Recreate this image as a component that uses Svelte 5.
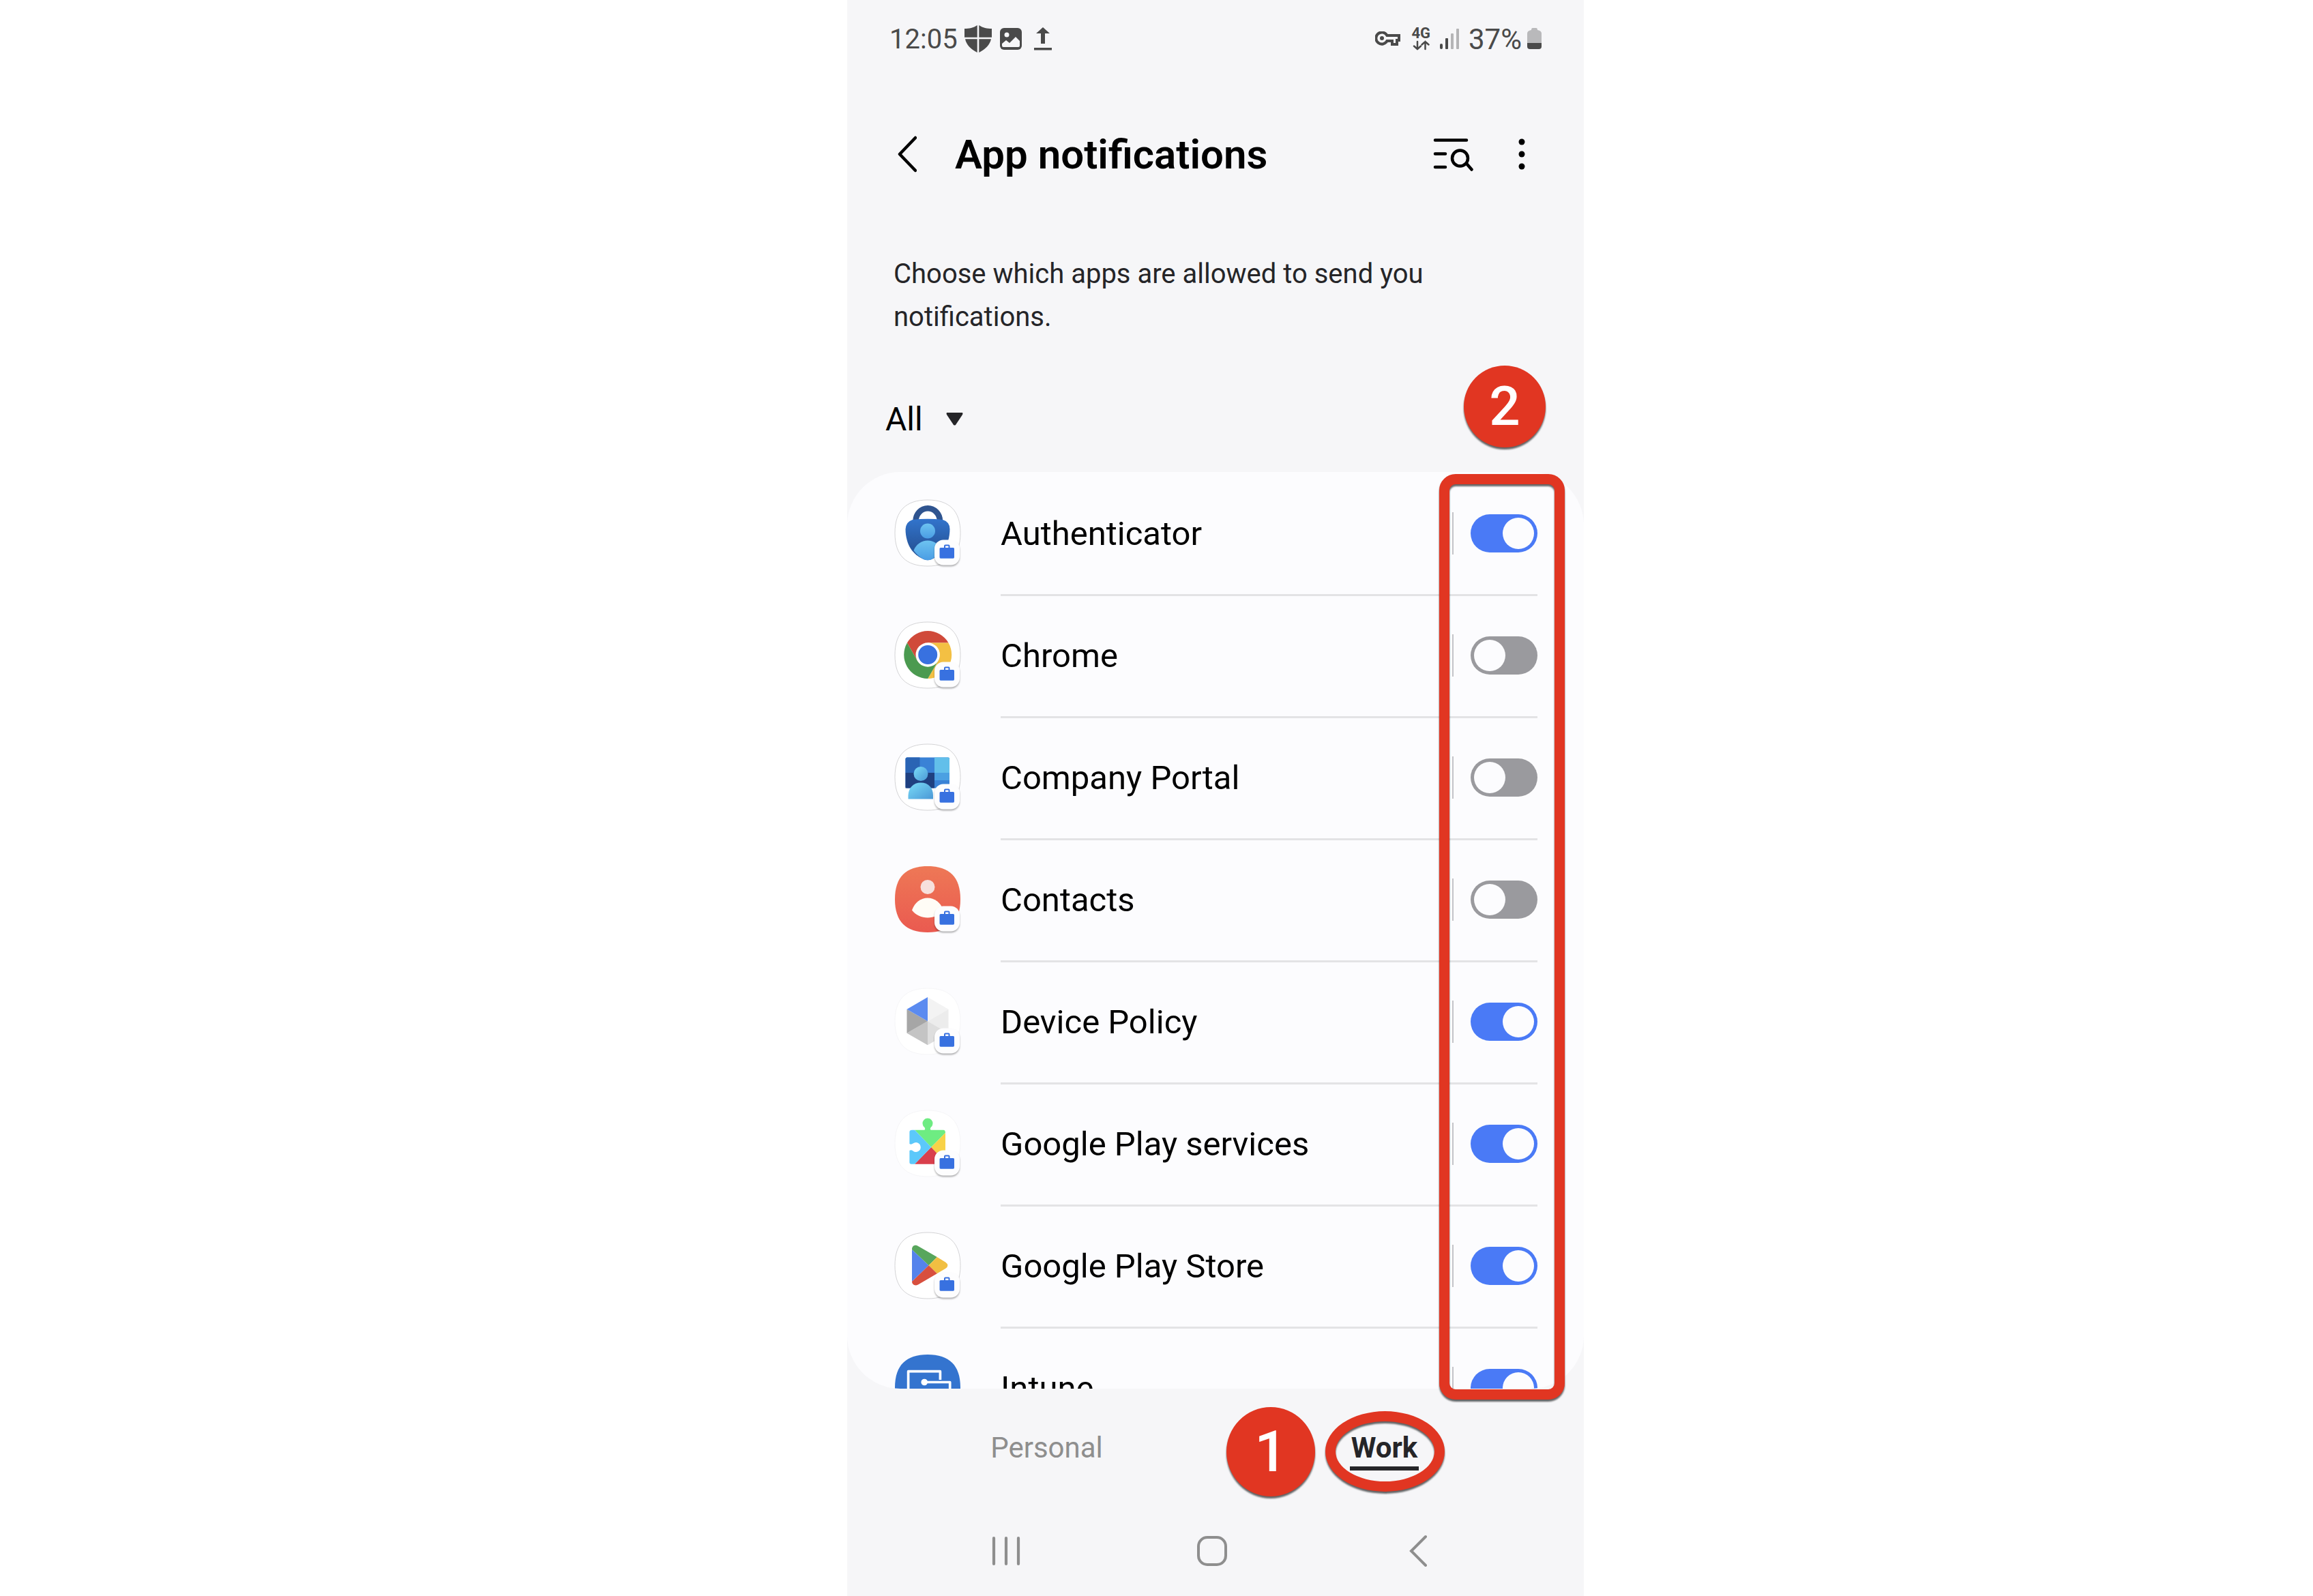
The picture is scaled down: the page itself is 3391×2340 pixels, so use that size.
<script lang="ts">
  interface App {
    id: string;
    name: string;
    enabled: boolean;
  }

  let apps: App[] = $state([
    { id: 'authenticator', name: 'Authenticator', enabled: true },
    { id: 'chrome', name: 'Chrome', enabled: false },
    { id: 'portal', name: 'Company Portal', enabled: false },
    { id: 'contacts', name: 'Contacts', enabled: false },
    { id: 'policy', name: 'Device Policy', enabled: true },
    { id: 'services', name: 'Google Play services', enabled: true },
    { id: 'store', name: 'Google Play Store', enabled: true },
    { id: 'intune', name: 'Intune', enabled: true },
  ]);

  let profile = $state('work');

  const tile = 'M48 0C80 0 96 16 96 48.5S80 97 48 97 0 81 0 48.5 16 0 48 0Z';
  const tileFill: Record<string, string> = {
    contacts: 'url(#contacts-bg)',
    intune: '#3474cf',
  };
  const tileStroke: Record<string, string> = {
    contacts: 'none',
    intune: 'none',
    policy: '#f6f6f8',
    services: '#f6f6f8',
  };
</script>

<div class="page">
  <main class="phone">
    <div class="status">
      <span class="clock">12:05</span>
      <svg class="shield" width="40" height="40" viewBox="0 0 40 40" fill="#4a4a4a">
        <path d="M18.700 0C13 4 7 5 0 5V17.700H18.700ZM21.300 0C27 4 33 5 40 5V17.700H21.300ZM18.700 20.300H1C3 29 9 35 18.700 40ZM21.300 20.300H39C37 29 31 35 21.300 40Z" />
      </svg>
      <svg class="photo" width="32" height="32" viewBox="0 0 32 32">
        <rect width="32" height="32" rx="6" fill="#4a4a4a" />
        <circle cx="10" cy="10" r="3.500" fill="#f6f6f8" />
        <path d="M3 23L9 18L14 22L23 13L29 19V26Q29 28 27 28H5Q3 28 3 26Z" fill="#f6f6f8" />
      </svg>
      <svg width="26" height="34" viewBox="0 0 26 34" fill="#4a4a4a">
        <path d="M13 0L23 9H16V24H10V9H3ZM0 30H26V33.500H0Z" />
      </svg>
      <span class="spacer"></span>
      <svg class="key" width="37" height="22" viewBox="0 0 37 22">
        <path d="M17.500 6H35V13H32V19H25V14H17.500A8.600 8.600 0 1 1 17.500 6Z" fill="none" stroke="#4a4a4a" stroke-width="4" />
        <circle cx="10" cy="10" r="3" fill="#4a4a4a" />
      </svg>
      <span class="network">
        <span>4G</span>
        <svg width="25" height="15" viewBox="0 0 25 15" fill="none" stroke="#4a4a4a" stroke-width="2.500" stroke-linecap="round">
          <path d="M7 2V13M2 8.500L7 13L12 8.500M18.500 13V2M13.500 6.500L18.500 2L23.500 6.500" />
        </svg>
      </span>
      <svg class="signal" width="28" height="30" viewBox="0 0 28 30" fill="#4a4a4a">
        <rect y="22" width="4" height="8" rx="2" />
        <rect x="8" y="14" width="4" height="16" rx="1" />
        <rect x="16" y="7" width="4" height="23" rx="1" opacity="0.38" />
        <rect x="24" width="4" height="30" rx="1" opacity="0.38" />
      </svg>
      <span class="percent">37%</span>
      <svg width="21" height="32" viewBox="0 0 21 32">
        <path d="M6 3Q6 0 8 0H13Q15 0 15 3Q21 4 21 8V22H0V8Q0 4 6 3Z" fill="#b9b9bb" />
        <path d="M0 22H21V27Q21 31 17 31H4Q0 31 0 27Z" fill="#4a4a4a" />
      </svg>
    </div>

    <header class="appbar">
      <button class="icon-btn" aria-label="Navigate up">
        <svg width="30" height="56" viewBox="0 0 30 56" fill="none" stroke="#000" stroke-width="4.500" stroke-linecap="round" stroke-linejoin="round">
          <path d="M28 4L5 28L28 52" />
        </svg>
      </button>
      <h1>App notifications</h1>
      <button class="icon-btn" aria-label="Search">
        <svg width="60" height="52" viewBox="0 0 60 52" fill="none" stroke="#000" stroke-width="4.500" stroke-linecap="round">
          <path d="M4 5.500H50M4 25.500H19M4 45H19M51 41L57.500 48.500" />
          <circle cx="40.500" cy="32" r="11.500" />
        </svg>
      </button>
      <button class="icon-btn more" aria-label="More options">
        <svg width="10" height="46" viewBox="0 0 10 46">
          <circle cx="5" cy="5" r="4.500" /><circle cx="5" cy="23" r="4.500" /><circle cx="5" cy="41" r="4.500" />
        </svg>
      </button>
    </header>

    <p class="intro">Choose which apps are allowed to send you notifications.</p>

    <div class="filter">
      <select aria-label="Show apps">
        <option>All</option>
      </select>
      <svg width="25" height="19" viewBox="0 0 25 19"><path d="M1 0H24Q25 1 24 3L14 18Q12.500 19 11 18L1 3Q0 1 1 0Z" fill="#252528" /></svg>
    </div>

    <section class="list-area">
      <ul class="list">
        {#each apps as app (app.id)}
          <li class="app">
            <svg class="app-icon" width="96" height="97" viewBox="0 0 96 97">
              <path d={tile} fill={tileFill[app.id] ?? '#fff'} stroke={tileStroke[app.id] ?? '#d4d4d6'} />
              {#if app.id === 'authenticator'}
                <defs>
                  <linearGradient id="auth-body" x2="0" y2="1">
                    <stop stop-color="#3274cc" /><stop offset="0.700" stop-color="#27569c" />
                  </linearGradient>
                  <linearGradient id="auth-person" x2="0" y2="1">
                    <stop stop-color="#6dc3f0" /><stop offset="1" stop-color="#4a9de4" />
                  </linearGradient>
                </defs>
                <path d="M30.500 32V31A17.500 18.500 0 0 1 66 31V32" fill="none" stroke="#2f548f" stroke-width="8.500" />
                <path d="M26 29Q48 26.500 70 29Q80.500 32 80.500 43C80 66 70 80 54 87Q48 89.500 42 87C26 80 16 66 15.500 43Q16 32 26 29Z" fill="url(#auth-body)" />
                <circle cx="48" cy="45.500" r="11" fill="url(#auth-person)" />
                <path d="M27.500 74C31 65 39 59.500 48 59.500S65 65 69 74Q63 82 54 87Q48 89.500 42 87Q33 82 27.500 74Z" fill="url(#auth-person)" />
              {:else if app.id === 'chrome'}
                <path d="M17.900 30.500A35 35 0 0 1 78.500 30.500H48.200L33 56.750Z" fill="#d04a3a" />
                <path d="M78.500 30.500A35 35 0 0 1 48.200 83L63.400 56.750L48.200 30.500Z" fill="#f3c043" />
                <path d="M48.200 83A35 35 0 0 1 17.900 30.500L33 56.750H63.400Z" fill="#4b9a50" />
                <circle cx="48.200" cy="48" r="17.700" fill="#fff" />
                <circle cx="48.200" cy="48" r="14" fill="#3871e0" />
              {:else if app.id === 'portal'}
                <defs>
                  <linearGradient id="portal-person" x2="1" y2="1">
                    <stop stop-color="#7adcf8" /><stop offset="1" stop-color="#4a98d6" />
                  </linearGradient>
                </defs>
                <rect x="15.500" y="19.500" width="64.500" height="45" rx="2" fill="#3a82d6" />
                <path d="M17.500 19.500H36.500V42H15.500V21.500Z" fill="#2a64b4" />
                <path d="M15.500 42H58V64.500H15.500Z" fill="#1f4080" />
                <path d="M58 19.500H78Q80 19.500 80 21.500V42H58Z" fill="#62bfea" />
                <path d="M58 42H80V53H58Z" fill="#4ba0e2" />
                <circle cx="38" cy="43.500" r="10.500" fill="url(#portal-person)" />
                <path d="M19.500 80.500V75C20 64 27 56.500 38 56.500S56 64 56 75V80.500Z" fill="url(#portal-person)" />
              {:else if app.id === 'contacts'}
                <defs>
                  <linearGradient id="contacts-bg" x2="0" y2="1">
                    <stop stop-color="#ee7856" /><stop offset="1" stop-color="#ea5a50" />
                  </linearGradient>
                </defs>
                <circle cx="48" cy="30.500" r="10.500" fill="#f7e0dc" />
                <path d="M25 64.500C29 53 38 46.500 48 46.500S67 53 71 64.500C65 72 57 75.500 48 75.500S31 72 25 64.500Z" fill="#fffcf6" />
              {:else if app.id === 'policy'}
                <path d="M48 13L78.500 30.700L48 48.300Z" fill="#f3f3f3" />
                <path d="M78.500 30.700V65.700L48 48.300Z" fill="#ececec" />
                <path d="M78.500 65.700L48 83.300V48.300Z" fill="#dedede" />
                <path d="M48 83.300L17.500 65.700L48 48.300Z" fill="#c4c4c4" />
                <path d="M17.500 65.700V30.700L48 48.300Z" fill="#a6a6a6" />
                <path d="M17.500 30.700L48 13V48.300Z" fill="#5b8bf0" />
              {:else if app.id === 'services'}
                <path d="M29 28.700H43.500Q45 27 43.500 25A7.500 7.500 0 1 1 52.500 25Q51 27 52.500 28.700H71Q74 28.700 74 33L53.200 54Z" fill="#6eec82" />
                <path d="M74 33V78.700L53.200 54Z" fill="#f8d248" />
                <path d="M29 78.700L53.200 54L76 78.700Z" fill="#d93f4c" />
                <path d="M29 28.700L53.200 54L29 78.700H24Q21.400 78.700 21.400 76V59Q24 57.500 26.500 59.500A7 7 0 1 0 26.500 48.500Q24 50.500 21.400 49V32Q21.400 28.700 25 28.700Z" fill="#5cc8fa" />
              {:else if app.id === 'store'}
                <path d="M25 25L49.600 48.300L25 72Z" fill="#5583ec" />
                <path d="M25 25C25 19 30 17.500 34 20L61.800 36L49.600 48.300Z" fill="#58a65c" />
                <path d="M61.800 36L74 43.500Q81 48.300 74 53L61.800 60.300L49.600 48.300Z" fill="#f1bf42" />
                <path d="M25 72L49.600 48.300L61.800 60.300L34 76.500C29 79 25 76 25 72Z" fill="#d84f3e" />
              {:else if app.id === 'intune'}
                <path d="M19.600 66V24.700H66.400V37M43 40.500H80.700V66" fill="none" stroke="#fff" stroke-width="3.700" stroke-linejoin="round" />
                <circle cx="43.200" cy="40.500" r="4.800" fill="#fff" />
              {/if}
              <g class="work-badge">
                <rect x="58" y="58.500" width="37" height="37" rx="13" fill="#fdfdfe" />
              </g>
              <path d="M67 70H72V67.500Q72 65.500 74 65.500H78.500Q80.500 65.500 80.500 67.500V70H85.500Q87 70 87 71.500V84Q87 85.700 85.500 85.700H67Q65.500 85.700 65.500 84V71.500Q65.500 70 67 70ZM74 70H78.500V67.500H74Z" fill="#3871e0" fill-rule="evenodd" />
            </svg>
            <div class="row">
              <label class="name" for={app.id}>{app.name}</label>
              <span class="rule"></span>
              <input id={app.id} class="switch" type="checkbox" role="switch" bind:checked={app.enabled} />
            </div>
          </li>
        {/each}
      </ul>
      <div class="highlight"></div>
      <span class="step step-two">2</span>
    </section>

    <div class="tabs" role="tablist">
      <button role="tab" aria-selected={profile === 'personal'} onclick={() => (profile = 'personal')}>
        <span class="tab-label">Personal</span>
      </button>
      <button role="tab" aria-selected={profile === 'work'} onclick={() => (profile = 'work')}>
        <span class="tab-label">Work</span>
      </button>
      <span class="step step-one">1</span>
      <span class="ring"></span>
    </div>

    <nav class="navbar">
      <button class="icon-btn" aria-label="Recents">
        <svg width="42" height="46" viewBox="0 0 42 46" stroke="#8e8e8e" stroke-width="4.200" stroke-linecap="round">
          <path d="M3 4V42M21 4V42M39 4V42" />
        </svg>
      </button>
      <button class="icon-btn" aria-label="Home">
        <svg width="46" height="46" viewBox="0 0 46 46" fill="none" stroke="#8e8e8e" stroke-width="4">
          <rect x="3" y="3" width="40" height="40" rx="13" />
        </svg>
      </button>
      <button class="icon-btn" aria-label="Back">
        <svg width="30" height="50" viewBox="0 0 30 50" fill="none" stroke="#8e8e8e" stroke-width="4" stroke-linecap="round">
          <path d="M26 4L5 25L26 46" />
        </svg>
      </button>
    </nav>
  </main>
</div>

<style>
  :global(body) {
    margin: 0;
    background: #fff;
  }

  .page {
    display: grid;
    grid-template-columns: 1242fr 1080fr 1069fr;
    font-family: Roboto, "Noto Sans", sans-serif;
    color: #000;
  }

  .phone {
    grid-column: 2;
    display: flex;
    flex-direction: column;
    height: 100vh;
    background: #f6f6f8;
  }

  button {
    border: none;
    padding: 0;
    background: none;
    font: inherit;
    cursor: pointer;
  }

  svg {
    display: block;
    flex-shrink: 0;
  }

  .status {
    display: flex;
    align-items: center;
    height: 114px;
    padding: 0 62px;
    color: #4a4a4a;
    font-size: 40px;
  }

  .shield {
    margin-left: 10px;
  }

  .photo {
    margin: 0 18px 0 12px;
  }

  .spacer {
    flex: 1;
  }

  .network {
    display: flex;
    flex-direction: column;
    align-items: center;
    gap: 2px;
    margin: 0 14px 0 16px;
    font-size: 22px;
    font-weight: 700;
    line-height: 16px;
  }

  .percent {
    margin: 0 8px 0 14px;
    font-size: 42px;
  }

  .appbar {
    display: flex;
    align-items: center;
    height: 112px;
    margin-top: 56px;
    padding: 0 86px 0 72px;
  }

  h1 {
    flex: 1;
    margin: 0 0 0 56px;
    padding-top: 2px;
    font-size: 60px;
    font-weight: 600;
    line-height: 68px;
  }

  .more {
    margin-left: 66px;
  }

  .intro {
    margin: 88px 200px 0 68px;
    color: #252528;
    font-size: 40px;
    line-height: 63px;
  }

  .filter {
    display: flex;
    align-items: center;
    gap: 34px;
    margin: 88px 56px 48px;
  }

  select {
    appearance: none;
    border: none;
    padding: 2px 0 0;
    background: none;
    color: inherit;
    font: inherit;
    font-size: 48px;
    line-height: 58px;
  }

  .list-area {
    position: relative;
    flex: 1;
    min-height: 0;
  }

  .list {
    height: 100%;
    margin: 0;
    padding: 0;
    border-radius: 78px;
    background: #fcfcfe;
    list-style: none;
    overflow: hidden;
  }

  .app {
    display: flex;
    align-items: center;
    height: 179px;
    padding: 0 68px 0 70px;
  }

  .app-icon {
    margin-right: 59px;
    overflow: visible;
  }

  .work-badge {
    filter: drop-shadow(0 2px 1px rgba(0, 0, 0, 0.3));
  }

  .row {
    display: flex;
    flex: 1;
    align-items: center;
    height: 100%;
  }

  .app + .app .row {
    box-shadow: inset 0 3px #e3e3e5;
  }

  .name {
    flex: 1;
    padding-top: 2px;
    font-size: 49px;
    line-height: 60px;
  }

  .rule {
    width: 2px;
    height: 62px;
    margin-right: 25px;
    background: #c4c4c8;
  }

  .switch {
    appearance: none;
    box-sizing: border-box;
    display: flex;
    width: 98px;
    height: 56px;
    margin: 0;
    padding: 5px;
    border-radius: 28px;
    background: #9a9a9e;
    cursor: pointer;
  }

  .switch::before {
    content: "";
    width: 46px;
    height: 46px;
    border-radius: 50%;
    background: #fcfcfe;
  }

  .switch:checked {
    justify-content: flex-end;
    background: #4a7af6;
  }

  .highlight {
    position: absolute;
    top: 3px;
    right: 28px;
    bottom: -16px;
    box-sizing: border-box;
    width: 184px;
    border: 15px solid #e13622;
    border-radius: 24px;
    filter: drop-shadow(0 3px 1px rgba(0, 0, 0, 0.6));
    pointer-events: none;
  }

  .step {
    position: absolute;
    display: grid;
    place-items: center;
    border-radius: 50%;
    background: #e13622;
    color: #fff;
    font-weight: 500;
    filter: drop-shadow(0 3px 1px rgba(0, 0, 0, 0.6));
  }

  .step-one {
    top: 27px;
    right: 394px;
    width: 130px;
    height: 131px;
    font-size: 84px;
  }

  .step-two {
    top: -156px;
    right: 56px;
    width: 120px;
    height: 120px;
    font-size: 80px;
  }

  .tabs {
    position: relative;
    display: flex;
    align-items: flex-start;
    padding: 62px 45px 0;
    font-size: 42px;
    line-height: 50px;
  }

  .tabs button {
    flex: 1;
    color: #8e8e8e;
  }

  .tab-label {
    display: inline-block;
    padding: 0 2px 2px;
    border-bottom: 6px solid transparent;
  }

  .tabs button[aria-selected="true"] {
    color: #252528;
    font-weight: 700;
  }

  [aria-selected="true"] .tab-label {
    border-color: #252528;
  }

  .ring {
    position: absolute;
    top: 33px;
    right: 204px;
    box-sizing: border-box;
    width: 175px;
    height: 118px;
    border: 15px solid #e13622;
    border-radius: 50%;
    filter: drop-shadow(0 3px 1px rgba(0, 0, 0, 0.6));
    pointer-events: none;
  }

  .navbar {
    display: grid;
    grid-template-columns: repeat(3, 1fr);
    justify-items: center;
    align-items: center;
    height: 132px;
    margin-top: 52px;
    padding: 0 92px 0 82px;
  }
</style>
